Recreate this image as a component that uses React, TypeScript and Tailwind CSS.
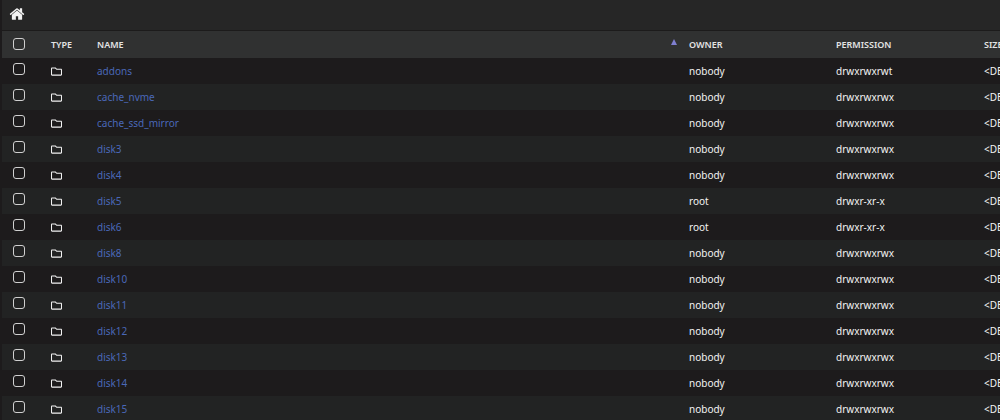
import { useState } from 'react'
import { FaRegFolder } from 'react-icons/fa'

type Entry = {
  name: string
  owner: string
  permission: string
}

const entries: Entry[] = [
  { name: 'addons', owner: 'nobody', permission: 'drwxrwxrwt' },
  { name: 'cache_nvme', owner: 'nobody', permission: 'drwxrwxrwx' },
  { name: 'cache_ssd_mirror', owner: 'nobody', permission: 'drwxrwxrwx' },
  { name: 'disk3', owner: 'nobody', permission: 'drwxrwxrwx' },
  { name: 'disk4', owner: 'nobody', permission: 'drwxrwxrwx' },
  { name: 'disk5', owner: 'root', permission: 'drwxr-xr-x' },
  { name: 'disk6', owner: 'root', permission: 'drwxr-xr-x' },
  { name: 'disk8', owner: 'nobody', permission: 'drwxrwxrwx' },
  { name: 'disk10', owner: 'nobody', permission: 'drwxrwxrwx' },
  { name: 'disk11', owner: 'nobody', permission: 'drwxrwxrwx' },
  { name: 'disk12', owner: 'nobody', permission: 'drwxrwxrwx' },
  { name: 'disk13', owner: 'nobody', permission: 'drwxrwxrwx' },
  { name: 'disk14', owner: 'nobody', permission: 'drwxrwxrwx' },
  { name: 'disk15', owner: 'nobody', permission: 'drwxrwxrwx' },
]

function HomeIcon() {
  return (
    <svg viewBox="0 0 1792 1792" className="size-4 fill-current" aria-hidden="true">
      <path d="M1472 992v480q0 26-19 45t-45 19h-384v-384h-256v384h-384q-26 0-45-19t-19-45v-480q0-1 .5-3t.5-3l575-474 575 474q1 2 1 6zm223-69l-62 74q-8 9-21 11h-3q-13 0-21-7l-692-577-692 577q-12 8-24 7-13-2-21-11l-62-74q-8-10-7-23.5t11-21.5l719-599q32-26 76-26t76 26l244 204v-195q0-14 9-23t23-9h192q14 0 23 9t9 23v408l219 182q10 8 11 21.5t-7 23.5z" />
    </svg>
  )
}

function Checkbox({
  label,
  checked,
  onChange,
}: {
  label: string
  checked: boolean
  onChange: () => void
}) {
  return (
    <input
      type="checkbox"
      aria-label={label}
      checked={checked}
      onChange={onChange}
      className="block size-3 appearance-none rounded-[3px] border border-[#d0d0d0] checked:bg-[#4a68b8]"
    />
  )
}

export default function App() {
  const [selected, setSelected] = useState<string[]>([])
  const allSelected = selected.length === entries.length

  const toggle = (name: string) =>
    setSelected((prev) =>
      prev.includes(name) ? prev.filter((n) => n !== name) : [...prev, name],
    )

  return (
    <div className="h-screen overflow-hidden bg-[#1d1b1c] pl-0.5 font-['Noto_Sans','Open_Sans',sans-serif] text-[10px] text-[#f2f2f2]">
      <nav className="flex h-[31px] items-center border-b border-[#1c1b1b] bg-[#262626] px-[7px] pb-0.5">
        <a href="#" aria-label="Home">
          <HomeIcon />
        </a>
      </nav>

      <table className="w-full min-w-[1130px] table-fixed border-collapse text-left">
        <colgroup>
          <col className="w-[49px]" />
          <col className="w-[46px]" />
          <col />
          <col className="w-[147px]" />
          <col className="w-[148px]" />
          <col className="w-[148px]" />
        </colgroup>
        <thead>
          <tr className="h-[27px] bg-[#303131] text-[9px] text-[#e4e4e4] uppercase">
            <th className="pb-0.5 pl-[11px]">
              <Checkbox
                label="Select all"
                checked={allSelected}
                onChange={() => setSelected(allSelected ? [] : entries.map((e) => e.name))}
              />
            </th>
            <th className="font-semibold">Type</th>
            <th className="font-semibold" aria-sort="ascending">
              <div className="flex items-center justify-between pr-3">
                Name
                <svg viewBox="0 0 6 6" className="mb-1.5 size-1.5 fill-[#7f7fd0]" aria-hidden="true">
                  <path d="M3 0 6 6H0z" />
                </svg>
              </div>
            </th>
            <th className="font-semibold">Owner</th>
            <th className="font-semibold">Permission</th>
            <th className="font-semibold">Size</th>
          </tr>
        </thead>
        <tbody>
          {entries.map((entry) => (
            <tr key={entry.name} className="h-[26px] even:bg-[#222323]">
              <td className="pb-1 pl-[11px]">
                <Checkbox
                  label={`Select ${entry.name}`}
                  checked={selected.includes(entry.name)}
                  onChange={() => toggle(entry.name)}
                />
              </td>
              <td>
                <FaRegFolder className="size-[11px]" />
              </td>
              <td>
                <a href={`#${entry.name}`} className="text-[#4a68b8]">
                  {entry.name}
                </a>
              </td>
              <td>{entry.owner}</td>
              <td>{entry.permission}</td>
              <td>&lt;DEVICE&gt;</td>
            </tr>
          ))}
        </tbody>
      </table>
    </div>
  )
}
